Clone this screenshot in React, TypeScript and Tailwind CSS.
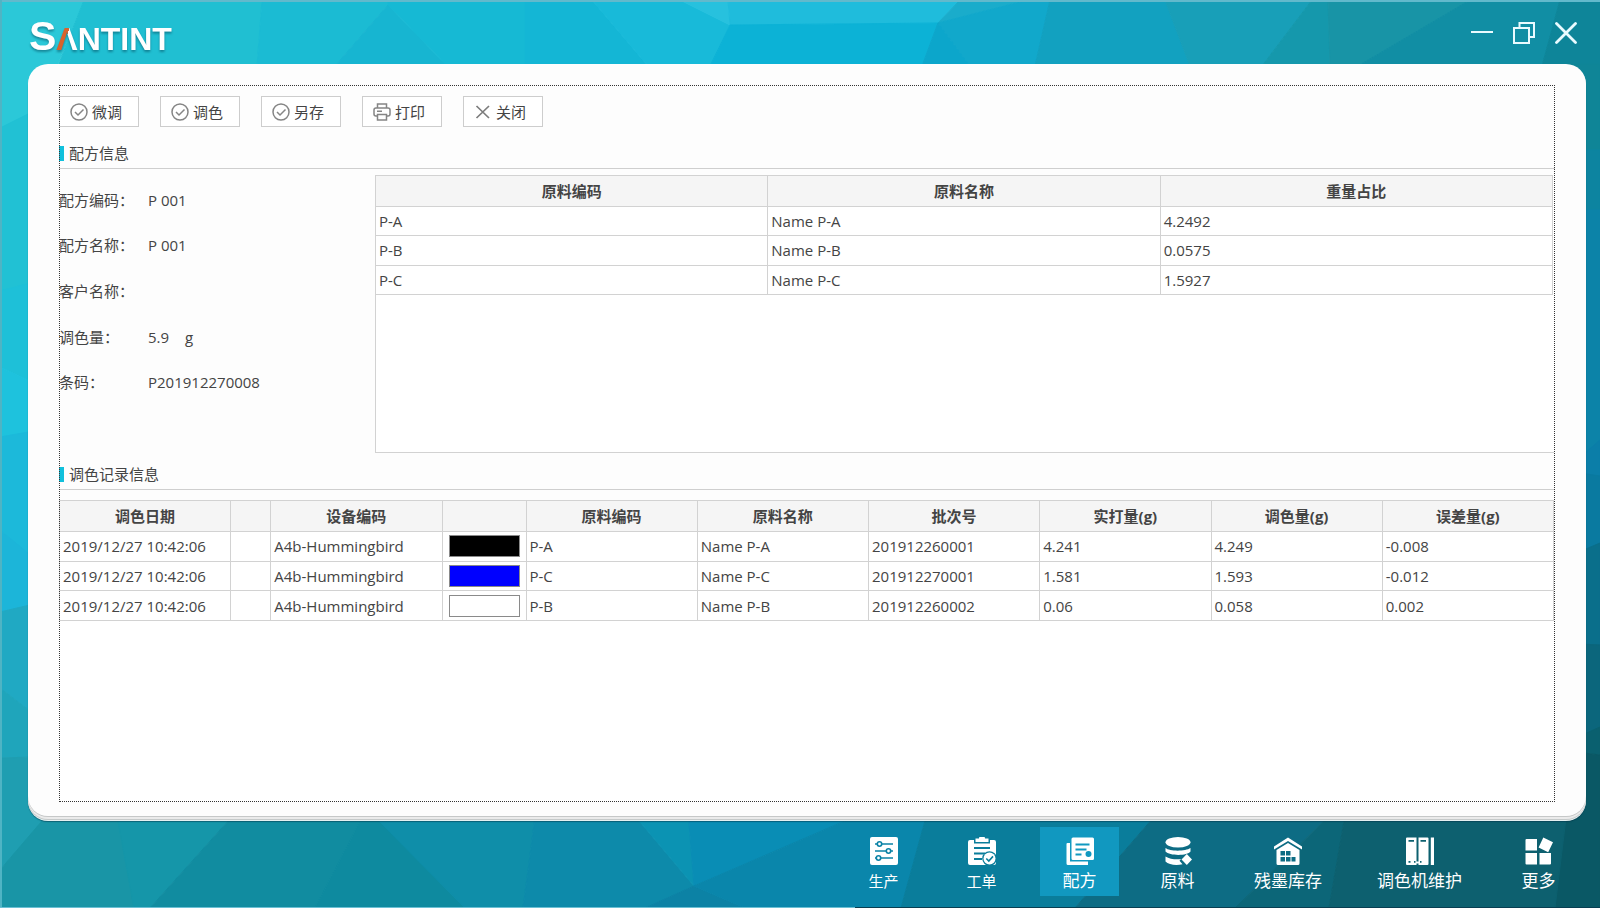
import type { ReactNode } from "react";
import clsx from "clsx";

const facets = [
  // top band
  { points: "0,0 84,0 58,64 58,120 0,130", fill: "#2bc8d8" },
  { points: "84,0 262,0 257,66 58,66", fill: "#20bfd2" },
  { points: "262,0 388,0 388,5 335,66 257,66", fill: "#1bbbd3" },
  { points: "388,5 447,66 335,66", fill: "#17b5d1" },
  { points: "388,0 525,0 525,66 447,66 388,5", fill: "#16b9d4" },
  { points: "525,0 592,0 648,66 525,66", fill: "#14b6d5" },
  { points: "592,0 680,0 730,25 710,66 648,66", fill: "#18bad9" },
  { points: "680,0 728,0 730,25", fill: "#27c1de" },
  { points: "728,0 960,0 938,23 730,25", fill: "#1fbcdc" },
  { points: "730,25 938,23 922,66 710,66", fill: "#0cb2d6" },
  { points: "960,0 1028,0 938,23", fill: "#1aaccb" },
  { points: "1028,0 1050,0 1035,66 970,66 938,23", fill: "#11a8cb" },
  { points: "938,23 970,66 922,66", fill: "#0ca6cb" },
  { points: "1050,0 1165,0 1190,66 1035,66", fill: "#12a1c0" },
  { points: "1165,0 1312,0 1262,66 1190,66", fill: "#189fb8" },
  { points: "1312,0 1328,0 1330,66 1262,66", fill: "#1598ac" },
  { points: "1328,0 1470,0 1358,66 1330,66", fill: "#1894a6" },
  { points: "1470,0 1560,0 1542,66 1358,66", fill: "#118ea4" },
  { points: "1560,0 1600,0 1600,66 1542,66", fill: "#0e8599" },
  // left edge
  { points: "0,128 34,111 34,285 0,291", fill: "#21c1d4" },
  { points: "0,291 34,282 34,383 0,367", fill: "#1ec0d8" },
  { points: "0,367 34,383 34,432 0,437", fill: "#1ec2dd" },
  { points: "0,437 34,431 34,560 0,530", fill: "#1cb9da" },
  { points: "0,530 34,558 34,605 0,612", fill: "#1cb5d9" },
  { points: "0,612 34,604 34,714 0,688", fill: "#20a9c3" },
  { points: "0,688 34,714 34,757 0,758", fill: "#1fa5bb" },
  { points: "0,758 34,757 60,800 43,821 0,870", fill: "#1f9eb1" },
  // right edge
  { points: "1560,64 1600,64 1600,150 1560,150", fill: "#0f8597" },
  { points: "1560,150 1600,150 1600,210 1560,210", fill: "#0d84a0" },
  { points: "1560,210 1600,210 1600,445 1560,480", fill: "#0c83a8" },
  { points: "1560,475 1600,440 1600,476 1560,480", fill: "#0b7ea8" },
  { points: "1560,470 1600,476 1600,545 1560,560", fill: "#0a7aa0" },
  { points: "1560,560 1600,543 1600,645 1560,645", fill: "#0a6f8b" },
  { points: "1560,643 1600,645 1600,728 1560,745", fill: "#0b667c" },
  { points: "1560,745 1600,727 1600,755 1560,750", fill: "#0a606f" },
  { points: "1560,750 1600,755 1600,908 1555,908", fill: "#0a5865" },
  // bottom band
  { points: "0,870 60,800 118,800 134,908 0,908", fill: "#1995a6" },
  { points: "116,810 238,810 150,908 134,908", fill: "#1596a9" },
  { points: "238,810 366,810 315,908 150,908", fill: "#118ca0" },
  { points: "366,810 370,810 465,908 315,908", fill: "#0e8a9f" },
  { points: "368,810 536,810 523,908 465,908", fill: "#0f8ea9" },
  { points: "536,810 630,810 694,886 645,908 523,908", fill: "#0d8aaa" },
  { points: "630,810 688,810 694,886", fill: "#0b93b3" },
  { points: "688,810 870,810 694,886", fill: "#098db5" },
  { points: "645,908 694,886 745,908", fill: "#0c82a5" },
  { points: "870,810 928,810 901,908 745,908 694,886", fill: "#0a86ab" },
  { points: "928,810 1160,810 1075,908 901,908", fill: "#0a7d9b" },
  { points: "1160,810 1335,810 1235,908 1075,908", fill: "#0d6c84" },
  { points: "1335,810 1346,810 1329,908 1235,908", fill: "#0c6678" },
  { points: "1346,810 1567,810 1555,908 1329,908", fill: "#0d606f" },
];

function Backdrop() {
  return (
    <svg
      aria-hidden="true"
      viewBox="0 0 1600 908"
      preserveAspectRatio="none"
      className="absolute inset-0 -z-10 size-full"
    >
      {/* same-colour stroke closes the hairline seams between facets */}
      {facets.map((f) => (
        <polygon key={f.points} points={f.points} fill={f.fill} stroke={f.fill} />
      ))}
      <path d="M0 1H1600" stroke="#62b9cc" strokeWidth="2" />
      <path d="M1 0V908" stroke="#4fb4c4" strokeWidth="2" />
      <path d="M0 907.5H855" stroke="#6bc0d4" />
      <path d="M855 907.5H1600" stroke="#083f52" />
    </svg>
  );
}

function CheckIcon() {
  return (
    <svg viewBox="0 0 18 18" className="size-[18px] shrink-0" fill="none" stroke="#858585" strokeWidth="1.5">
      <circle cx="9" cy="9" r="8" />
      <path d="M5 9l3 3 5.500-5.500" />
    </svg>
  );
}

function PrintIcon() {
  return (
    <svg viewBox="0 0 18 18" className="size-[18px] shrink-0" fill="none" stroke="#858585" strokeWidth="1.5">
      <path d="M4.500 5V1h9v4M4.500 13H3a2 2 0 0 1-2-2V7a2 2 0 0 1 2-2h12a2 2 0 0 1 2 2v4a2 2 0 0 1-2 2h-1.500" />
      <path d="M4.500 11.500h9V17h-9zM4 8.300h5" />
    </svg>
  );
}

function CrossIcon() {
  return (
    <svg viewBox="0 0 18 18" className="size-[18px] shrink-0" fill="none" stroke="#7c7c7c" strokeWidth="1.700">
      <path d="M2.500 3l12.500 12M15 3L2.500 15" />
    </svg>
  );
}

const actions = [
  { label: "微调", icon: <CheckIcon /> },
  { label: "调色", icon: <CheckIcon /> },
  { label: "另存", icon: <CheckIcon /> },
  { label: "打印", icon: <PrintIcon /> },
  { label: "关闭", icon: <CrossIcon /> },
];

const formula = [
  { label: "配方编码", value: "P 001" },
  { label: "配方名称", value: "P 001" },
  { label: "客户名称", value: "" },
  { label: "调色量", value: "5.9", unit: "g" },
  { label: "条码", value: "P201912270008" },
];

const ingredients = [
  ["P-A", "Name P-A", "4.2492"],
  ["P-B", "Name P-B", "0.0575"],
  ["P-C", "Name P-C", "1.5927"],
];

const records = [
  { date: "2019/12/27 10:42:06", device: "A4b-Hummingbird", swatch: "bg-black", cells: ["P-A", "Name P-A", "201912260001", "4.241", "4.249", "-0.008"] },
  { date: "2019/12/27 10:42:06", device: "A4b-Hummingbird", swatch: "bg-[#0000ff]", cells: ["P-C", "Name P-C", "201912270001", "1.581", "1.593", "-0.012"] },
  { date: "2019/12/27 10:42:06", device: "A4b-Hummingbird", swatch: "bg-white", cells: ["P-B", "Name P-B", "201912260002", "0.06", "0.058", "0.002"] },
];

const recordHeads = ["调色日期", "", "设备编码", "", "原料编码", "原料名称", "批次号", "实打量(g)", "调色量(g)", "误差量(g)"];

function NavIcon({ children }: { children: ReactNode }) {
  return (
    <svg viewBox="0 0 28 28" className="size-7" fill="#fff" aria-hidden="true">
      {children}
    </svg>
  );
}

const nav = [
  {
    label: "生产",
    small: true,
    icon: (
      <NavIcon>
        <rect width="28" height="28" rx="2" />
        <g stroke="#0a82a6" strokeWidth="1.6" fill="none">
          <path d="M5 7h2M12 7h11M5 14h11M21 14h2M5 21h1M11 21h12" />
          <circle cx="9.500" cy="7" r="2.200" />
          <circle cx="18.500" cy="14" r="2.200" />
          <circle cx="8.500" cy="21" r="2.200" />
        </g>
      </NavIcon>
    ),
  },
  {
    label: "工单",
    small: true,
    icon: (
      <NavIcon>
        <path d="M2 3h4v3.500h16V3h4a2 2 0 0 1 2 2v21a2 2 0 0 1-2 2H2a2 2 0 0 1-2-2V5a2 2 0 0 1 2-2z" />
        <path d="M7.500 1.500H11a3 2.500 0 0 1 6 0h3.500v3.500h-13z" />
        <g stroke="#0a7d9b" fill="none">
          <path d="M6 11h16M6 16.500h11M6 22h8" strokeWidth="1.800" />
          <circle cx="21.500" cy="21.500" r="7.300" fill="#0a7d9b" stroke="none" />
          <circle cx="21.500" cy="21.500" r="6" fill="#fff" stroke="none" />
          <path d="M18.300 21.500l2.500 2.500 4.200-4.600" strokeWidth="1.600" />
        </g>
      </NavIcon>
    ),
  },
  {
    label: "配方",
    active: true,
    icon: (
      <NavIcon>
        <path d="M1.500 6H4v18.500h18V28H2a1.500 1.500 0 0 1-1.500-1.500V7a1 1 0 0 1 1-1z" />
        <path d="M7 .5h19.500A1.500 1.500 0 0 1 28 2v19.500a1.500 1.500 0 0 1-1.500 1.500H7a1.500 1.500 0 0 1-1.500-1.500V2A1.500 1.500 0 0 1 7 .5z" />
        <path d="M9.500 7.500h14M9.500 12.500h11M9.500 17.500h6" stroke="#1198c0" strokeWidth="1.800" />
        <circle cx="22.500" cy="17" r="3" fill="#1198c0" />
      </NavIcon>
    ),
  },
  {
    label: "原料",
    icon: (
      <NavIcon>
        <ellipse cx="14" cy="5.300" rx="12.500" ry="5.200" />
        <path d="M1.500 11c4 3.500 20 3.500 25 0v3.500c-3 4.500-21 4.500-25 0z" />
        <path d="M1.500 19.500c4 2.500 10 3.200 15.500 2.600l-1.500 1.700 3 3.500c-6 1.200-14 .7-17-2.800z" />
        <path d="M22.800 17l5.200 5.500-5.200 5.500-5.300-5.500z" />
      </NavIcon>
    ),
  },
  {
    label: "残墨库存",
    icon: (
      <NavIcon>
        <path d="M14 .5L28 9.500v3L14 4 0 12.500v-3z" />
        <path d="M14 6l11.500 7v13.500A1.500 1.500 0 0 1 24 28H4a1.500 1.500 0 0 1-1.500-1.500V13z" />
        <path d="M6.500 14h4.500v4.500H6.500zM12 14h4.500v4.500H12zM6.500 20h4.500v4.500H6.500zM12 20h4.500v4.500H12zM17.500 20h4v4.500h-4z" fill="#0d6c84" />
      </NavIcon>
    ),
  },
  {
    label: "调色机维护",
    icon: (
      <NavIcon>
        <path d="M1 .5h9.500V28H1A1 1 0 0 1 0 27V1.500a1 1 0 0 1 1-1zM12.500.5h9a1 1 0 0 1 1 1V27a1 1 0 0 1-1 1h-9zM24.800.5H28V28h-3.200z" />
        <path d="M10 24.500h3v2h-3z" />
        <path d="M2.500 3H8v1.800H2.500zM14.500 3H20v1.800h-5.500zM2.500 24h2v1.800h-2zM8 24h1.500v1.800H8zM14 24h1.500v1.800H14z" fill="#0d606f" />
      </NavIcon>
    ),
  },
  {
    label: "更多",
    icon: (
      <NavIcon>
        <path d="M1.500 2h10.500v11.500H.500V3a1 1 0 0 1 1-1zM.500 16h11.500v11.500H1.500a1 1 0 0 1-1-1zM14.500 16H26v10.500a1 1 0 0 1-1 1H14.500zM18.300 0.500L28 5.300l-4.800 10L13.600 10.500z" />
      </NavIcon>
    ),
  },
];

function SectionTitle({ children }: { children: ReactNode }) {
  return (
    <div className="flex h-[31px] items-center gap-[5px] border-b border-[#cfcfcf]">
      <span className="h-[15px] w-[5px] bg-[#10c0dc]" />
      <h2>{children}</h2>
    </div>
  );
}

const cell = "h-[29px] border border-[#d2d2d2] px-[3px] py-0 leading-5";
const headCell = "h-[31px] border border-[#d2d2d2] bg-[#f5f5f5] p-0 text-center font-bold leading-5";

export default function App() {
  return (
    <div className="relative isolate flex min-h-screen flex-col font-['Open_Sans','Noto_Sans_CJK_SC',sans-serif] text-[15px] leading-5 text-[#444]">
      <Backdrop />

      <header className="flex h-16 shrink-0 items-start justify-between pr-[23px] pl-[29px]">
        <h1
          aria-label="SANTINT"
          className="mt-2 flex items-baseline font-['Liberation_Sans',sans-serif] text-[32px] leading-[56px] font-bold text-white drop-shadow-[0_2px_1px_rgba(0,60,80,0.45)]"
        >
          <span className="text-[41px]">S</span>
          <span className="bg-[linear-gradient(109deg,#d9622b_47%,#fff_47%)] bg-clip-text text-transparent">Λ</span>
          <span>NTINT</span>
        </h1>
        <div className="mt-[22px] flex gap-5">
          <button type="button" aria-label="最小化">
            <svg viewBox="0 0 22 22" className="size-[22px]" fill="none" stroke="#e9fbff" strokeWidth="2">
              <path d="M0 10h22" />
            </svg>
          </button>
          <button type="button" aria-label="还原">
            <svg viewBox="0 0 22 22" className="size-[22px]" fill="none" stroke="#e9fbff" strokeWidth="2">
              <path d="M1 6h15v15H1zM6.500 6V1H21v14h-5" />
            </svg>
          </button>
          <button type="button" aria-label="关闭窗口">
            <svg viewBox="0 0 22 22" className="size-[22px]" fill="none" stroke="#e9fbff" strokeWidth="2.800" strokeLinecap="round">
              <path d="M1.500 1.500l19 19M20.500 1.500l-19 19" />
            </svg>
          </button>
        </div>
      </header>

      <main className="mr-[14px] mb-[5px] ml-7 flex flex-1 flex-col rounded-[20px] bg-[#fdfdfd] px-[31px] pt-[21px] pb-[14px] shadow-[0_1px_0_#c6c8c8,0_3px_0_#ebebeb,0_4px_0_#c6caca,0_5px_0_#e6f0f1,0_6px_1px_rgba(0,50,70,0.5)]">
        <div className="relative flex flex-1 flex-col pt-[11px]">
          <div className="flex gap-[21px]">
            {actions.map((a) => (
              <button
                key={a.label}
                type="button"
                className="flex h-[31px] w-20 items-center gap-1 border border-[#cdcdcd] bg-white px-[10px] whitespace-nowrap"
              >
                {a.icon}
                {a.label}
              </button>
            ))}
          </div>

          <section className="mt-[11px]">
            <SectionTitle>配方信息</SectionTitle>
            <div className="mt-[6px] flex h-[278px]">
              <dl className="flex h-[230px] w-[316px] shrink-0 flex-col pt-[2px]">
                {formula.map((f) => (
                  <div key={f.label} className="flex flex-1 items-center">
                    <dt className="w-[89px]">{f.label}：</dt>
                    <dd>{f.value}</dd>
                    {f.unit && <dd className="ml-4">{f.unit}</dd>}
                  </div>
                ))}
              </dl>
              <div className="mr-px flex-1 border-b border-l border-[#d2d2d2] bg-white">
                <table className="-ml-px h-[120px] w-full table-fixed border-collapse">
                  <thead>
                    <tr>
                      <th className={headCell}>原料编码</th>
                      <th className={headCell}>原料名称</th>
                      <th className={headCell}>重量占比</th>
                    </tr>
                  </thead>
                  <tbody>
                    {ingredients.map((row) => (
                      <tr key={row[0]}>
                        {row.map((value) => (
                          <td key={value} className={cell}>{value}</td>
                        ))}
                      </tr>
                    ))}
                  </tbody>
                </table>
              </div>
            </div>
          </section>

          <section className="mt-[6px] flex flex-1 flex-col">
            <SectionTitle>调色记录信息</SectionTitle>
            <div className="mt-[10px] mr-px flex-1 bg-white">
              <table className="h-[121px] w-full table-fixed border-collapse">
                <colgroup>
                  <col />
                  <col className="w-10" />
                  <col />
                  <col className="w-[84px]" />
                  <col span={6} />
                </colgroup>
                <thead>
                  <tr>
                    {recordHeads.map((head, i) => (
                      <th key={i} className={headCell}>{head}</th>
                    ))}
                  </tr>
                </thead>
                <tbody>
                  {records.map((r) => (
                    <tr key={r.cells[0]}>
                      <td className={cell}>{r.date}</td>
                      <td className={cell} />
                      <td className={cell}>{r.device}</td>
                      <td className="border border-[#d2d2d2] px-[6px] py-0">
                        <div className={clsx("h-[22px] border border-[#8a8a8a]", r.swatch)} />
                      </td>
                      {r.cells.map((value) => (
                        <td key={value} className={cell}>{value}</td>
                      ))}
                    </tr>
                  ))}
                </tbody>
              </table>
            </div>
          </section>

          {/* focus outline, drawn over the content edges */}
          <div className="pointer-events-none absolute inset-0 border border-dotted border-[#333]" />
        </div>
      </main>

      <nav className="flex h-[87px] shrink-0 justify-end gap-[19px] pt-[6px] pr-[22px]">
        {nav.map((n) => (
          <button
            key={n.label}
            type="button"
            className={clsx(
              "flex h-[69px] min-w-[79px] flex-col items-center gap-1 px-[18px] pt-[10px] whitespace-nowrap text-white",
              n.active && "bg-[#1198c0]",
              n.small ? "text-[15px]" : "text-[17px]",
            )}
          >
            {n.icon}
            <span className="leading-6">{n.label}</span>
          </button>
        ))}
      </nav>
    </div>
  );
}
